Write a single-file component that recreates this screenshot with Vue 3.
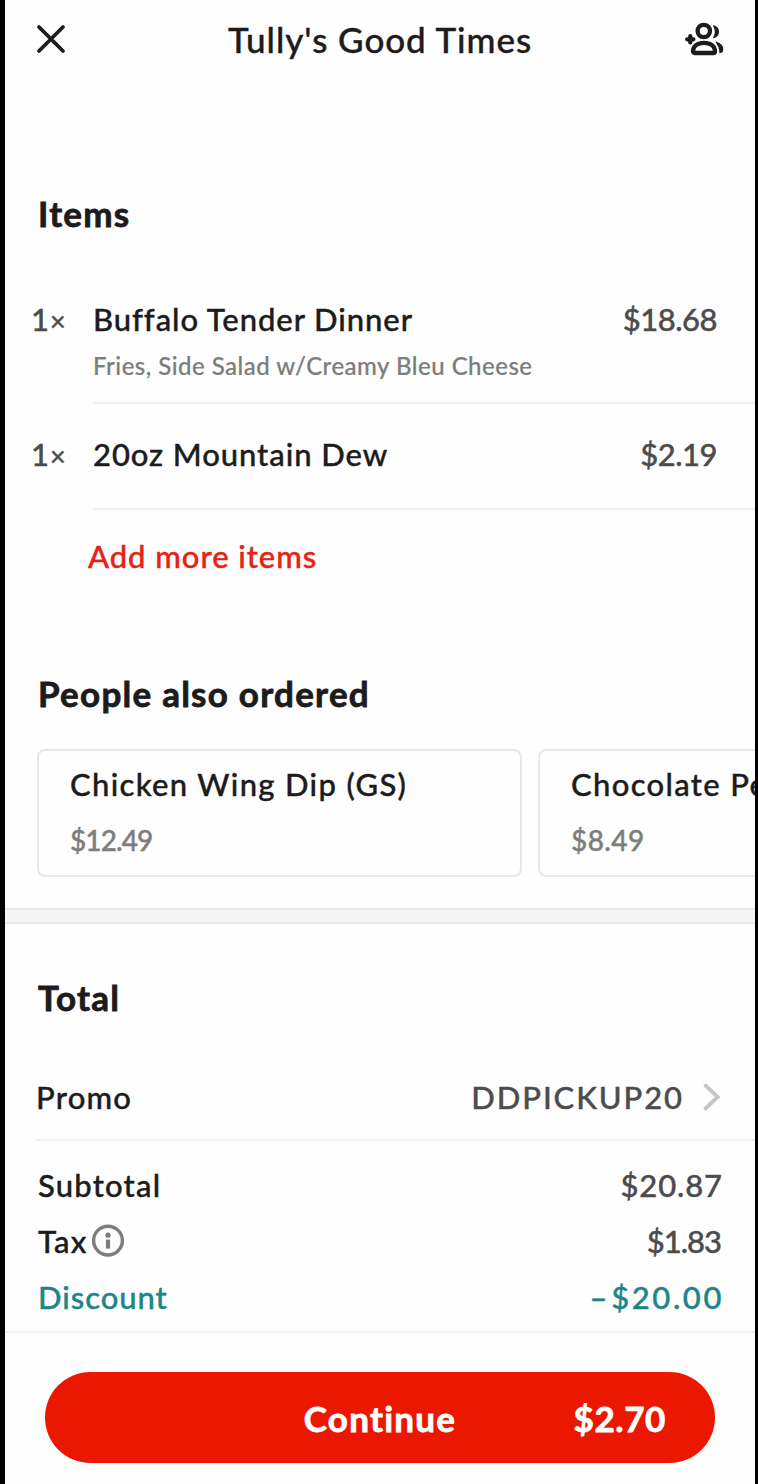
<template>
  <div class="app">
    <!-- Top bar -->
    <header class="topbar">
      <button class="icon-btn" aria-label="Close">
        <svg width="32" height="32" viewBox="0 0 32 32" fill="none" stroke="#1c1c1c" stroke-width="3.8" stroke-linecap="round">
          <path d="M4 4L28 28M28 4L4 28" />
        </svg>
      </button>
      <h1 class="store">Tully's Good Times</h1>
      <button class="icon-btn" aria-label="Group order">
        <svg width="40" height="36" viewBox="0 0 40 36" fill="none" stroke="#1c1c1c" stroke-width="4.3" stroke-linecap="round" stroke-linejoin="round">
          <circle cx="19.8" cy="10" r="6.2" />
          <path d="M9 30.2C9 25.3 13.4 21.8 20 21.8S31 25.3 31 30.2Q31 32 29.2 32H10.8Q9 32 9 30.2Z" />
          <path d="M6.3 15.2V21.4M3.2 18.3H9.4" />
          <path d="M29.6 4.8C36 7 36 14.6 29.6 16.8C32 13 32 9 29.6 4.8Z" fill="#1c1c1c" stroke-width="1.2" />
          <path d="M32.4 21.4C37.7 23.1 39.3 27 38.2 30.8L35.9 31.6C36.2 28 35.2 25 32.4 21.4Z" fill="#1c1c1c" stroke-width="1.2" />
        </svg>
      </button>
    </header>

    <!-- Cart items -->
    <section class="items">
      <h2 class="heading items-heading">Items</h2>
      <div v-for="item in items" :key="item.name" class="item">
        <div class="qty">{{ item.qty }}<span class="times">×</span></div>
        <div class="item-body">
          <div class="item-line">
            <span class="name">{{ item.name }}</span>
            <span class="price">{{ item.price }}</span>
          </div>
          <p v-if="item.options" class="options">{{ item.options }}</p>
        </div>
      </div>
      <a class="add-more">Add more items</a>
    </section>

    <!-- Suggestions -->
    <section class="suggestions">
      <h2 class="heading">People also ordered</h2>
      <div class="cards">
        <article v-for="s in suggestions" :key="s.name" class="card">
          <h3 class="card-name">{{ s.name }}</h3>
          <p class="card-price" :class="{ tight: s.tight }">{{ s.price }}</p>
        </article>
      </div>
    </section>

    <div class="band"></div>

    <!-- Totals -->
    <section class="totals">
      <h2 class="heading">Total</h2>
      <div class="promo">
        <span class="promo-label">Promo</span>
        <span class="code">DDPICKUP20</span>
        <svg class="chevron" width="20" height="30" viewBox="0 0 20 30" fill="none" stroke="#c6c6c6" stroke-width="3.8" stroke-linecap="round">
          <path d="M3.5 3.5L15.7 15L3.5 26.5" />
        </svg>
      </div>
      <div class="row">
        <span class="label">Subtotal</span>
        <span class="amount">$20.87</span>
      </div>
      <div class="row">
        <span class="label">Tax</span>
        <svg class="info" width="34" height="34" viewBox="0 0 34 34">
          <circle cx="17" cy="16.6" r="14.4" fill="none" stroke="#7d7d7d" stroke-width="3.4" />
          <circle cx="17" cy="11.2" r="2.6" fill="#7d7d7d" />
          <rect x="14.9" y="15.6" width="4.2" height="9" fill="#7d7d7d" />
        </svg>
        <span class="amount tight">$1.83</span>
      </div>
      <div class="row teal">
        <span class="label discount">Discount</span>
        <span class="amount wide"><span class="minus">–</span>$20.00</span>
      </div>
    </section>

    <footer class="footer">
      <button class="continue">
        <span class="continue-label">Continue</span>
        <span class="continue-price">$2.70</span>
      </button>
    </footer>
  </div>
</template>

<script setup>
const items = [
  {
    qty: 1,
    name: 'Buffalo Tender Dinner',
    price: '$18.68',
    options: 'Fries, Side Salad w/Creamy Bleu Cheese'
  },
  { qty: 1, name: '20oz Mountain Dew', price: '$2.19' }
]

const suggestions = [
  { name: 'Chicken Wing Dip (GS)', price: '$12.49', tight: true },
  { name: 'Chocolate Pe', price: '$8.49' }
]
</script>

<style>
body {
  margin: 0;
  background: #fefefe;
}
</style>

<style scoped>
.app {
  box-sizing: border-box;
  width: 758px;
  height: 1484px;
  overflow: hidden;
  border-left: 5px solid #000;
  border-right: 3px solid #000;
  background: #fefefe;
  color: #1c1c1c;
  font-family: Lato, "Liberation Sans", sans-serif;
  font-size: 31px;
  font-weight: 500;
  line-height: 40px;
  -webkit-text-stroke: 0.4px currentColor;
  display: flex;
  flex-direction: column;
}

h1,
h2,
h3,
p {
  margin: 0;
  font-weight: 500;
  white-space: nowrap;
}

button {
  border: none;
  background: none;
  padding: 0;
  font-family: inherit;
}

/* === Top bar === */
.topbar {
  height: 78px;
  padding: 0 31px 0 30px;
  display: flex;
  align-items: center;
  justify-content: space-between;
}

.icon-btn {
  display: flex;
}

.store {
  padding-left: 9px;
  font-size: 35px;
  letter-spacing: 0.95px;
}

.heading {
  font-size: 35px;
  line-height: 42px;
  font-weight: 700;
  padding-left: 33px;
  letter-spacing: 1.25px;
  -webkit-text-stroke-width: 0.8px;
}

/* === Items === */
.items {
  padding-top: 114px;
  height: 480px;
}

.items-heading {
  margin-bottom: 65px;
}

.item {
  display: flex;
}

.qty {
  width: 62px;
  padding-left: 26px;
  color: #4c4c4c;
}

.times {
  margin-left: 1px;
  font-size: 27px;
}

.item-body {
  flex: 1;
  border-bottom: 2px solid #f0f0f0;
  margin-bottom: 30px;
  padding-bottom: 21px;
}

.item:nth-of-type(2) .item-body {
  padding-bottom: 34px;
  margin-bottom: 26px;
}

.item-line {
  display: flex;
  justify-content: space-between;
  padding-right: 38px;
}

.name {
  letter-spacing: 0.93px;
}

.price {
  color: #4c4c4c;
  letter-spacing: -0.5px;
}

.options {
  margin-top: 12px;
  font-size: 24px;
  line-height: 30px;
  color: #7d7d7d;
  letter-spacing: 0.48px;
  -webkit-text-stroke-width: 0.2px;
}

.add-more {
  display: block;
  padding-left: 83px;
  color: #e62212;
  letter-spacing: 0.95px;
}

/* === Suggestions === */
.cards {
  display: flex;
  gap: 16px;
  margin-top: 35px;
  padding-left: 32px;
  overflow: hidden;
}

.card {
  box-sizing: border-box;
  flex: 0 0 485px;
  height: 128px;
  border: 2px solid #e7e7e7;
  border-radius: 8px;
  padding: 13px 31px;
}

.card-name {
  font-size: 31px;
  letter-spacing: 1.33px;
}

.card-price {
  margin-top: 16px;
  font-size: 28px;
  color: #7d7d7d;
  letter-spacing: 0.4px;
}

.card-price.tight {
  letter-spacing: -0.9px;
}

.band {
  box-sizing: border-box;
  height: 16px;
  margin-top: 31px;
  border-top: 2px solid #e8e8e8;
  border-bottom: 2px solid #e8e8e8;
  background: #f5f5f5;
}

/* === Totals === */
.totals {
  padding-top: 52px;
}

.promo {
  display: flex;
  align-items: center;
  margin: 59px 0 16px 31px;
  padding-bottom: 22px;
  border-bottom: 2px solid #f0f0f0;
}

.promo-label {
  letter-spacing: 1.2px;
}

.code {
  margin-left: auto;
  color: #4c4c4c;
  letter-spacing: 1.9px;
}

.chevron {
  margin: 0 33px 0 18px;
}

.row {
  display: flex;
  align-items: center;
  height: 56px;
  padding: 0 32px 0 33px;
}

.row:last-child {
  padding-bottom: 6px;
}

.label {
  letter-spacing: 1.2px;
}

.discount {
  letter-spacing: 0.95px;
}

.info {
  margin-left: 3px;
}

.amount {
  margin-left: auto;
  color: #4c4c4c;
  letter-spacing: 0.9px;
}

.amount.tight {
  letter-spacing: -1px;
  margin-right: 2px;
}

.amount.wide {
  letter-spacing: 2.6px;
  margin-right: -1px;
}

.minus {
  margin-right: 1px;
}

.teal,
.teal .amount {
  color: #1d8588;
}

/* === Footer === */
.footer {
  border-top: 2px solid #f0f0f0;
  padding: 39px 40px 0;
}

.continue {
  width: 670px;
  height: 91px;
  border-radius: 46px;
  background: #eb1700;
  color: #fff;
  font-size: 35px;
  font-weight: 700;
  letter-spacing: 1.25px;
  -webkit-text-stroke: 0.8px #fff;
  display: grid;
  grid-template-columns: 1fr auto 1fr;
  align-items: center;
}

.continue-label {
  grid-column: 2;
}

.continue-price {
  justify-self: end;
  margin-right: 49px;
  letter-spacing: 0.6px;
}
</style>
